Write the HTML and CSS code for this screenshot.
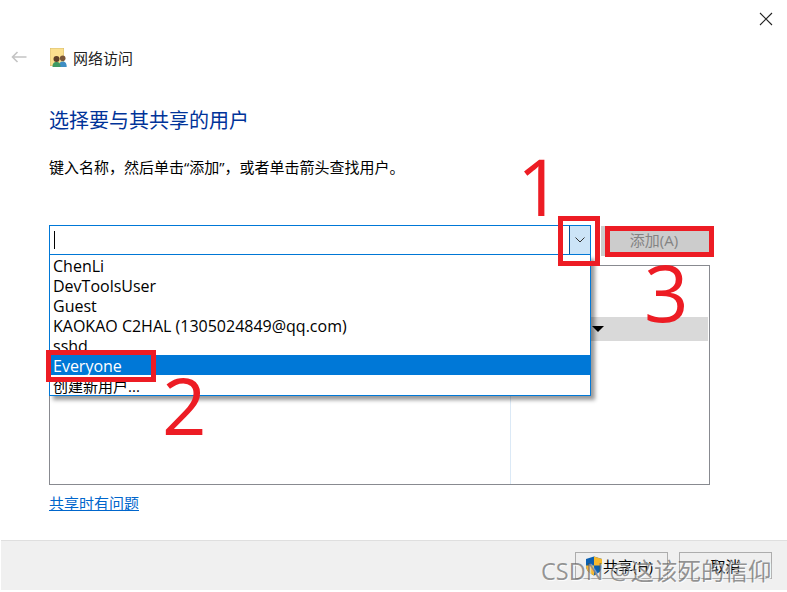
FILE: index.html
```html
<!DOCTYPE html>
<html lang="zh-CN">
<head>
  <meta charset="UTF-8">
  <title>网络访问</title>
  <link rel="stylesheet" href="styles.css">
</head>
<body>
  <div class="window">
    <div class="titlebar">
      <svg class="close" width="14" height="14" viewBox="0 0 14 14"><path d="M1 1l12 12M13 1L1 13" stroke="#222" stroke-width="1.1" fill="none"/></svg>
    </div>

    <div class="nav">
      <svg class="back" width="16" height="12" viewBox="0 0 16 12"><path d="M15.5 6H1.5M6.5 1L1.5 6l5 5" stroke="#c4c4c4" stroke-width="1.6" fill="none"/></svg>
      <svg class="folder" width="17" height="19" viewBox="0 0 17 19">
        <rect x="0.3" y="0.3" width="13.4" height="17.400" fill="#fbe08e" stroke="#dcbc60" stroke-width="0.6"/>
        <circle cx="12.700" cy="10.300" r="2.800" fill="#7a5638"/>
        <path d="M9 19c0-4 1.200-5.500 3.700-5.500s4 1.500 4 5.500z" fill="#3f8ec4"/>
        <circle cx="6.500" cy="11" r="3" fill="#5e4028"/>
        <path d="M2.500 19c0-4 1.500-5 4-5s4 1 4 5z" fill="#3f9a62"/>
      </svg>
      <span class="nav-title">网络访问</span>
    </div>

    <div class="content">
      <h1 class="heading">选择要与其共享的用户</h1>
      <p class="desc">键入名称，然后单击“添加”，或者单击箭头查找用户。</p>

      <div class="combo-row">
        <div class="combo">
          <span class="caret"></span>
          <span class="drop-btn">
            <svg width="10" height="6" viewBox="0 0 10 6"><path d="M.5.5L5 5l4.500-4.500" stroke="#333" fill="none"/></svg>
          </span>
          <ul class="drop-list">
            <li>ChenLi</li>
            <li>DevToolsUser</li>
            <li>Guest</li>
            <li>KAOKAO C2HAL (1305024849@qq.com)</li>
            <li>sshd</li>
            <li class="selected">Everyone</li>
            <li class="create">创建新用户...</li>
          </ul>
        </div>
        <button class="add-btn">添加(A)</button>
      </div>

      <div class="share-list">
        <div class="group-row"><span class="sort-arrow"></span></div>
        <div class="col-line"></div>
      </div>

      <a class="help-link" href="#">共享时有问题</a>
    </div>

    <div class="footer">
      <button class="foot-btn share-btn">
        <svg class="shield" width="18" height="20" viewBox="0 0 18 20">
          <path d="M9 0.500L17 3v7c0 4.500-3.500 7.500-8 9.500C4.500 17.500 1 14.500 1 10V3z" fill="#0b5fb0"/>
          <path d="M9 0.500L17 3v6.500H9z" fill="#f6b92c"/>
          <path d="M9 9.500H1V10c0 4.500 3.500 7.500 8 9.500z" fill="#f6b92c"/>
        </svg>
        共享(H)
      </button>
      <button class="foot-btn">取消</button>
    </div>
  </div>

  <!-- red annotations drawn on top of the screenshot -->
  <div class="mark mark-1"></div>
  <div class="mark mark-2"></div>
  <div class="mark mark-3"></div>
  <span class="num num-1">1</span>
  <span class="num num-2">2</span>
  <span class="num num-3">3</span>

  <span class="watermark">CSDN @这该死的信仰</span>
</body>
</html>
```

FILE: styles.css
```css
html, body {
  margin: 0;
  height: 592px;
  overflow: hidden;
  background: #fff;
}

body {
  position: relative;
  font-family: "Open Sans", "Noto Sans CJK SC", sans-serif;
  font-size: 14px;
  color: #000;
}

.window {
  display: flex;
  flex-direction: column;
  height: 590px;
}

.titlebar {
  display: flex;
  justify-content: flex-end;
  height: 45px;
  padding: 12px 14px 0 0;
  box-sizing: border-box;
}

.nav {
  display: flex;
  align-items: center;
  height: 24px;
  padding-left: 11px;
}

.back {
  margin-right: 23px;
}

.folder {
  margin-right: 6px;
}

.nav-title {
  font-size: 15px;
  color: #222;
}

.content {
  flex: 1;
  padding-left: 49px;
}

.heading {
  margin: 40px 0 0;
  font-size: 20px;
  font-weight: 400;
  line-height: 24px;
  color: #003399;
}

.desc {
  margin: 25px 0 0;
  font-size: 15px;
  line-height: 18px;
}

.combo-row {
  display: flex;
  margin-top: 49px;
  height: 31px;
}

.combo {
  position: relative;
  width: 542px;
  height: 31px;
  box-sizing: border-box;
  border: 1px solid #0078d7;
  border-bottom-width: 2px;
}

.caret {
  position: absolute;
  left: 4px;
  top: 5px;
  width: 1px;
  height: 18px;
  background: #000;
}

.drop-btn {
  position: absolute;
  right: 0;
  top: 0;
  display: flex;
  align-items: center;
  justify-content: center;
  width: 20px;
  height: 28px;
  background: #cce4f7;
  border-left: 1px solid #005499;
}

.drop-list {
  position: absolute;
  left: -1px;
  right: -1px;
  top: 29px;
  z-index: 2;
  margin: 0;
  padding: 0;
  list-style: none;
  background: #fff;
  border: 1px solid #0078d7;
  border-top: none;
  box-shadow: 4px 4px 4px rgba(0, 0, 0, 0.4);
}

.drop-list li {
  height: 20px;
  padding-left: 3px;
  font-size: 16px;
  line-height: 22px;
  white-space: nowrap;
}

.drop-list .selected {
  background: #0078d7;
  color: #fff;
}

.drop-list .create {
  font-size: 15px;
}

.add-btn {
  width: 108px;
  height: 30px;
  margin: 1px 0 0 10px;
  border: none;
  background: #cccccc;
  color: #838383;
  font-family: inherit;
  font-size: 15px;
  padding: 0 2px 4px 0;
}

.share-list {
  position: relative;
  width: 661px;
  height: 220px;
  margin-top: 9px;
  box-sizing: border-box;
  border: 1px solid #888a90;
}

.group-row {
  position: absolute;
  left: 460px;
  right: 1px;
  top: 51px;
  height: 24px;
  background: #d9d9d9;
}

.sort-arrow {
  position: absolute;
  left: 82px;
  top: 9px;
  border-left: 6px solid transparent;
  border-right: 6px solid transparent;
  border-top: 6px solid #000;
}

.col-line {
  position: absolute;
  left: 460px;
  top: 104px;
  bottom: 0;
  width: 1px;
  background: #dbe9f6;
}

.help-link {
  display: block;
  width: max-content;
  margin-top: 9px;
  font-size: 15px;
  line-height: 18px;
  color: #0066cc;
}

.footer {
  display: flex;
  justify-content: flex-end;
  gap: 11px;
  height: 50px;
  margin-left: 1px;
  padding: 11px 15px 0 0;
  box-sizing: border-box;
  background: #f0f0f0;
  border-top: 1px solid #dfdfdf;
}

.foot-btn {
  display: flex;
  align-items: center;
  justify-content: center;
  width: 93px;
  height: 27px;
  padding: 0;
  border: 1px solid #adadad;
  background: #efefef;
  font-family: inherit;
  font-size: 15px;
  color: #000;
}

.share-btn {
  padding-right: 5px;
}

.mark {
  position: absolute;
  box-sizing: border-box;
  border: 5px solid #ed1c24;
  z-index: 3;
}

.mark-1 {
  left: 558px;
  top: 216px;
  width: 42px;
  height: 50px;
}

.mark-2 {
  left: 46px;
  top: 350px;
  width: 110px;
  height: 32px;
}

.mark-3 {
  left: 605px;
  top: 226px;
  width: 109px;
  height: 31px;
}

.num {
  position: absolute;
  z-index: 3;
  font-size: 78px;
  line-height: 80px;
  color: #ed1c24;
}

.num-1 {
  left: 517px;
  top: 146px;
}

.num-2 {
  left: 162px;
  top: 365px;
}

.num-3 {
  left: 644px;
  top: 252px;
}

.watermark {
  position: absolute;
  left: 541px;
  top: 556px;
  z-index: 4;
  font-size: 23.5px;
  line-height: 30px;
  white-space: nowrap;
  color: rgba(80, 80, 80, 0.6);
  text-shadow: 1px 1px 1px rgba(255, 255, 255, 0.8);
}
```
